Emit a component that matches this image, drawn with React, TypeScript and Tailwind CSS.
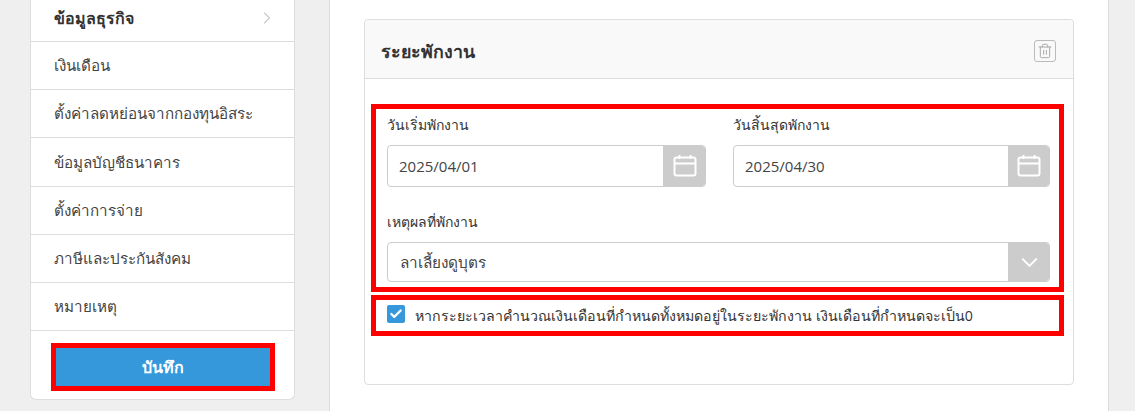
import { Check, ChevronDown, ChevronRight, Trash2 } from 'lucide-react';

const menuItems = [
  'เงินเดือน',
  'ตั้งค่าลดหย่อนจากกองทุนอิสระ',
  'ข้อมูลบัญชีธนาคาร',
  'ตั้งค่าการจ่าย',
  'ภาษีและประกันสังคม',
  'หมายเหตุ',
];

function CalendarIcon() {
  return (
    <svg viewBox="0 0 24 24" className="h-6 w-6" fill="none" stroke="#fff" strokeWidth="2">
      <rect x="1.5" y="3.5" width="21" height="18" rx="2" />
      <path d="M1.5 9.5h21M6.5 1v4M17.5 1v4" />
    </svg>
  );
}

function DateField({ label, value, addonClass }: { label: string; value: string; addonClass: string }) {
  return (
    <div>
      <label className="block h-5 text-[14px] leading-5 text-[#333]">{label}</label>
      <div className="mt-[10px] flex h-[42px] overflow-hidden rounded-[4px] border border-[#ccc]">
        <div className="flex-1 pl-[11px] text-[15px] leading-10 text-[#444]">{value}</div>
        <div className={`-my-px -mr-px flex items-center justify-center bg-[#ccc] ${addonClass}`}>
          <CalendarIcon />
        </div>
      </div>
    </div>
  );
}

export default function App() {
  return (
    <div className="flex h-[411px] w-[1135px] overflow-hidden bg-[#efefef] pl-[30px] font-['Open_Sans','Noto_Sans',sans-serif]">
      {/* Sidebar */}
      <div className="h-[400px] w-[265px] rounded-b-[6px] border-x border-b border-[#ddd] bg-white">
        <div className="flex h-[42px] items-center justify-between border-b border-[#ddd] pb-[5px] pl-[23px] pr-[17px]">
          <span className="text-[16px] font-bold text-[#333]">ข้อมูลธุรกิจ</span>
          <ChevronRight className="h-5 w-5 text-[#ccc]" strokeWidth={1.5} />
        </div>
        {menuItems.map((item) => (
          <div key={item} className="flex h-[48.2px] items-center border-b border-[#ddd] pl-[23px] text-[15.2px] text-[#444]">
            {item}
          </div>
        ))}
        <div className="pl-[25px] pt-[17px]">
          <button className="relative h-[38px] w-[214px] bg-[#3498db] text-[16px] font-semibold text-white">
            บันทึก
            <span className="absolute -inset-[5px] border-[5px] border-[#ff0000]" />
          </button>
        </div>
      </div>

      {/* Main panel */}
      <div className="ml-[34px] h-full w-[780px] border-x border-[#ddd] bg-white pl-[34px] pt-[19px]">
        <div className="relative h-[366px] w-[710px] rounded-[4px] border border-[#ddd]">
          <div className="flex h-[59px] items-center justify-between rounded-t-[4px] border-b border-[#ddd] bg-[#f9f9f9] pl-4 pr-[17px] pt-1">
            <span className="text-[17.8px] font-bold text-[#333]">ระยะพักงาน</span>
            <button className="flex h-[22px] w-[22px] items-center justify-center rounded-[3px] border border-[#bbb] text-[#aaa]">
              <Trash2 className="h-4 w-4" strokeWidth={1.5} />
            </button>
          </div>

          <div className="w-[686px] pl-[22px] pt-9">
            <div className="grid grid-cols-[319px_317px] gap-x-[27px]">
              <DateField label="วันเริ่มพักงาน" value="2025/04/01" addonClass="w-[43px]" />
              <DateField label="วันสิ้นสุดพักงาน" value="2025/04/30" addonClass="w-[42px]" />
            </div>

            <label className="mt-[25px] block h-5 text-[14px] leading-5 text-[#333]">เหตุผลที่พักงาน</label>
            <div className="mt-[10px] flex h-10 w-[663px] overflow-hidden rounded-[4px] border border-[#ccc]">
              <div className="flex-1 pl-3 text-[15.3px] leading-[38px] text-[#444]">ลาเลี้ยงดูบุตร</div>
              <div className="-my-px -mr-px flex w-[42px] items-center justify-center bg-[#ccc]">
                <ChevronDown className="h-[27px] w-[27px] text-white" strokeWidth={1.8} />
              </div>
            </div>

            <div className="mt-[23px] flex items-start gap-[10px]">
              <span className="flex h-[18px] w-[18px] items-center justify-center rounded-[2px] bg-[#3498db]">
                <Check className="h-[14px] w-[14px] text-white" strokeWidth={4} />
              </span>
              <span className="text-[14.2px] leading-[22px] text-[#333]">
                หากระยะเวลาคำนวณเงินเดือนที่กำหนดทั้งหมดอยู่ในระยะพักงาน เงินเดือนที่กำหนดจะเป็น0
              </span>
            </div>
          </div>

          {/* Annotation boxes */}
          <div className="absolute left-[6px] top-[84px] h-[188px] w-[693px] border-[5px] border-[#ff0000]" />
          <div className="absolute left-[6px] top-[275px] h-[41px] w-[693px] border-[5px] border-[#ff0000]" />
        </div>
      </div>
    </div>
  );
}
